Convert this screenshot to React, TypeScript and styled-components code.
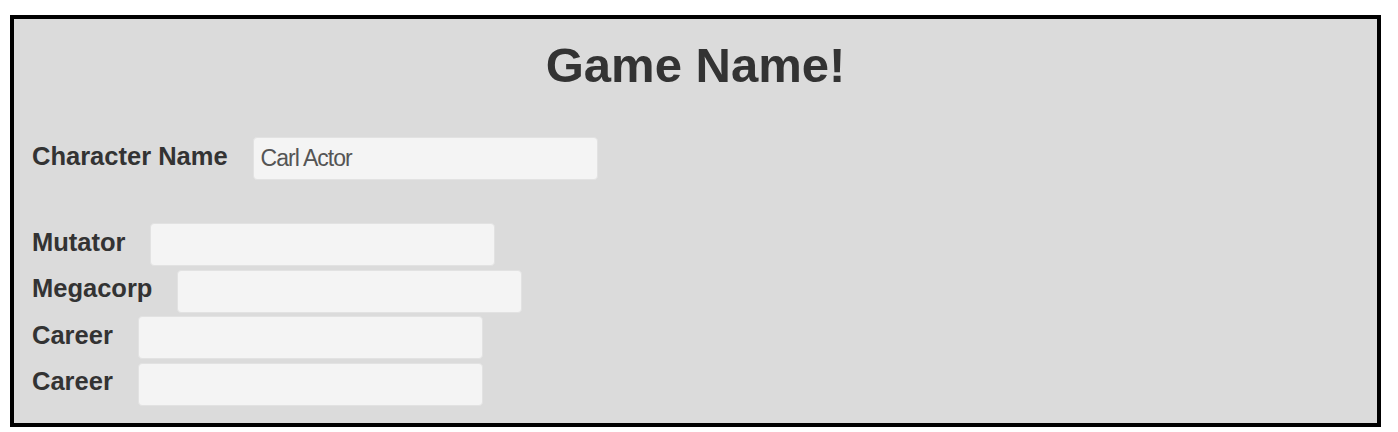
import React from "react";
import styled, { createGlobalStyle } from "styled-components";

const Global = createGlobalStyle`
  html, body { margin: 0; padding: 0; background: #ffffff; }
  body { font-family: "Liberation Sans", Arial, sans-serif; color: #333333; }
  * { box-sizing: border-box; }
`;

const Frame = styled.div`
  margin: 15px 17px 5px 10px;
  height: 412px;
  border: 4px solid #000000;
  background: #dbdbdb;
  padding: 19px 18px 18px 18px;
  display: flex;
  flex-direction: column;
`;

const Title = styled.h1`
  margin: 0;
  font-family: "Liberation Sans", Arial, sans-serif;
  font-weight: 700;
  font-size: 49px;
  line-height: 54px;
  text-align: center;
  color: #333333;
`;

const Row = styled.div<{ $top?: number }>`
  display: flex;
  align-items: center;
  gap: 25px;
  margin-top: ${(p) => p.$top ?? 0}px;
`;

const Fields = styled.div`
  display: flex;
  flex-direction: column;
  gap: 3.5px;
  margin-top: 43px;
`;

const Label = styled.label`
  font-family: "Liberation Sans", Arial, sans-serif;
  font-weight: 700;
  font-size: 25.5px;
  color: #333333;
  padding-bottom: 5px;
  white-space: nowrap;
`;

const Input = styled.input`
  width: 345px;
  height: 43px;
  background: #f4f4f4;
  border: 1px solid #e2e2e2;
  border-radius: 4px;
  padding: 0 7px;
  font-family: "Liberation Sans", Arial, sans-serif;
  font-size: 23px;
  letter-spacing: -1px;
  color: #555555;
  outline: none;
`;

export default function App() {
  return (
    <>
      <Global />
      <Frame>
        <Title>Game Name!</Title>
        <Row $top={45}>
          <Label>Character Name</Label>
          <Input defaultValue="Carl Actor" />
        </Row>
        <Fields>
          <Row>
            <Label>Mutator</Label>
            <Input />
          </Row>
          <Row>
            <Label>Megacorp</Label>
            <Input />
          </Row>
          <Row>
            <Label>Career</Label>
            <Input />
          </Row>
          <Row>
            <Label>Career</Label>
            <Input />
          </Row>
        </Fields>
      </Frame>
    </>
  );
}
